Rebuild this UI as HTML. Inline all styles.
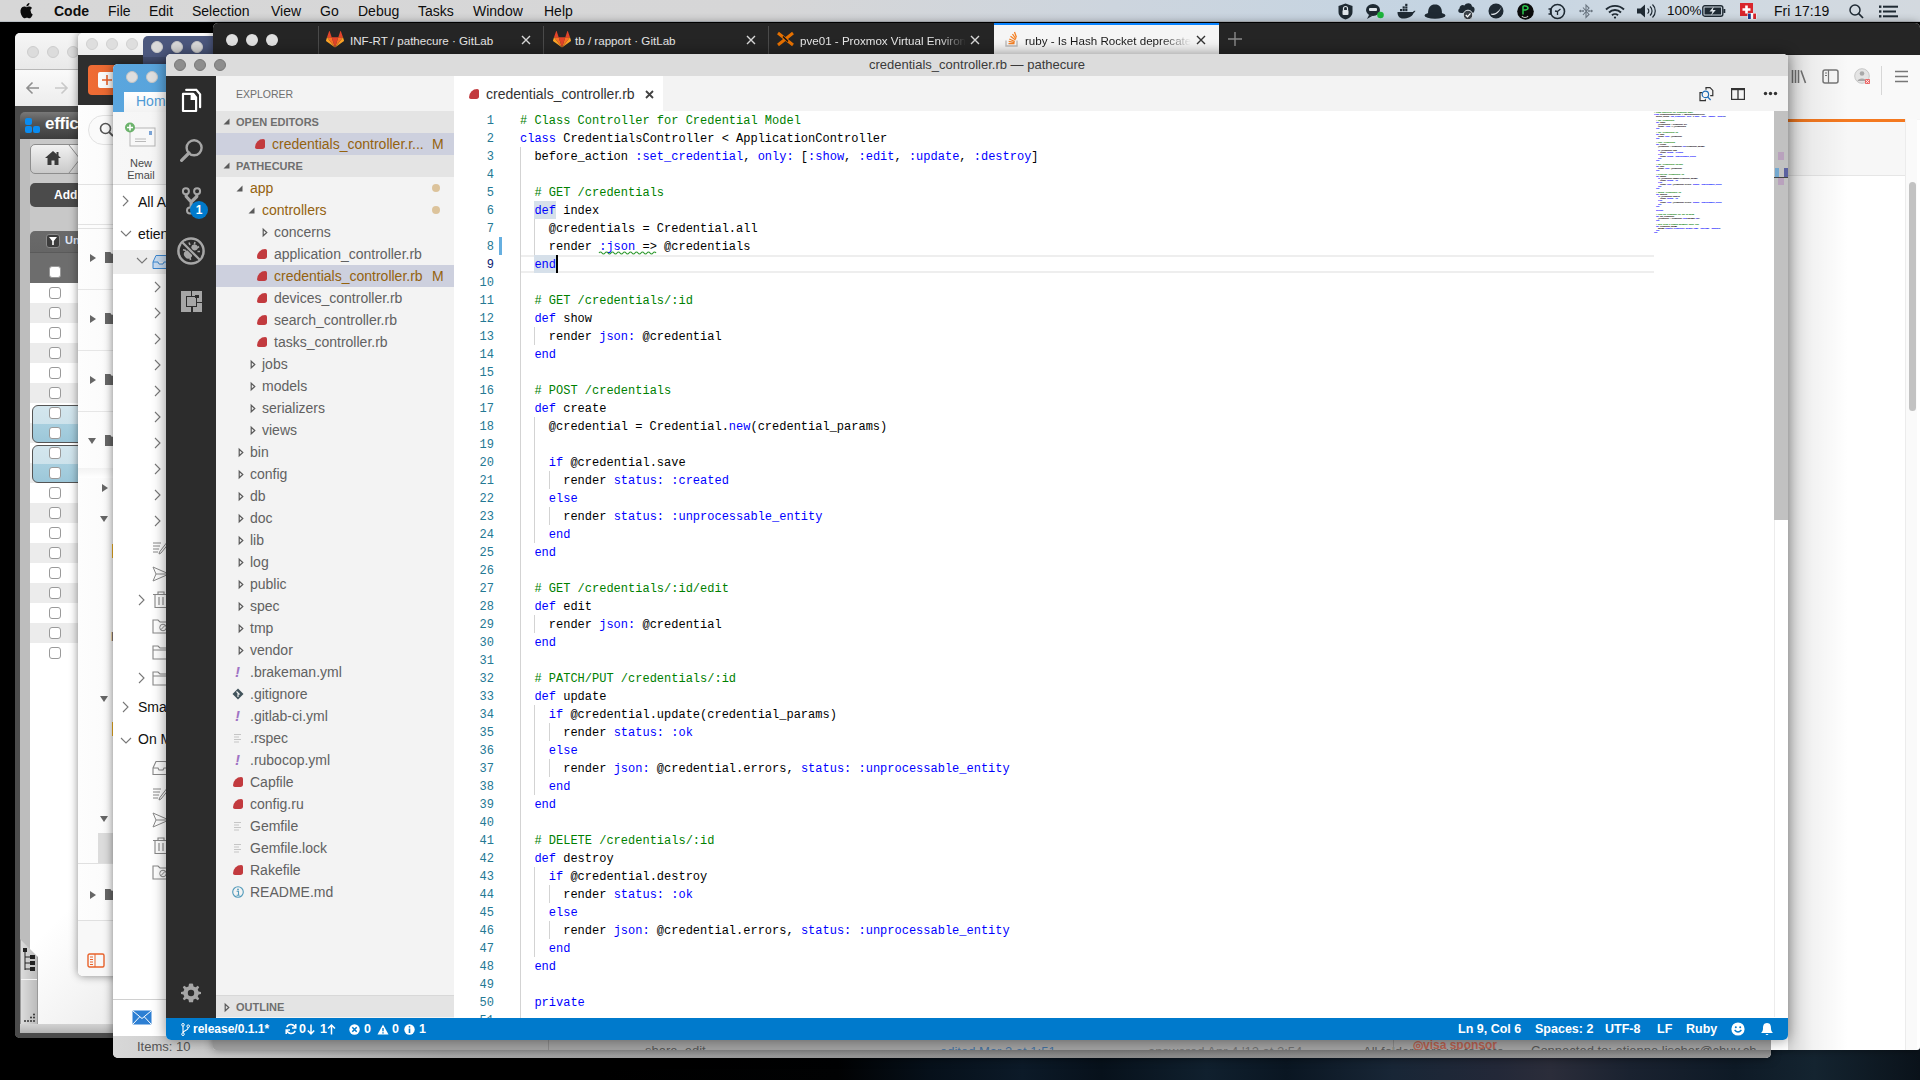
<!DOCTYPE html>
<html><head><meta charset="utf-8">
<style>
*{box-sizing:border-box;margin:0;padding:0}
html,body{width:1920px;height:1080px;overflow:hidden;background:#000;font-family:"Liberation Sans",sans-serif}
.a{position:absolute}
.mono{font-family:"Liberation Mono",monospace}
.tl{position:absolute;width:12px;height:12px;border-radius:50%}
svg{position:absolute;overflow:visible}
/* vscode */
#vs{left:166px;top:54px;width:1622px;height:986px;border-radius:5px;overflow:hidden;background:#fff;box-shadow:0 0 14px rgba(0,0,0,.45)}
#vstitle{left:0;top:0;width:1622px;height:22px;background:#dcdcdc;font-size:13px;color:#3a3a3a;text-align:center;line-height:21px}
#act{left:0;top:22px;width:50px;height:942px;background:#2c2c2c}
#side{left:50px;top:22px;width:238px;height:942px;background:#f3f3f3;font-size:14px;color:#616161;overflow:hidden}
#tabs{left:288px;top:22px;width:1334px;height:35px;background:#f3f3f3}
#editor{left:288px;top:57px;width:1334px;height:907px;background:#fff;overflow:hidden}
#status{left:0;top:964px;width:1622px;height:22px;background:#007acc;color:#fff;font-size:13px;line-height:22px;white-space:nowrap}
#status span{position:absolute;top:0}
.row{position:absolute;left:0;width:238px;height:22px;line-height:22px;white-space:nowrap}
.row .t{position:absolute;top:0}
.hdr{position:absolute;left:0;width:238px;height:22px;background:#e4e4e4;font-size:11px;font-weight:bold;color:#6f6f6f;line-height:22px}
.tw{position:absolute;width:0;height:0}
.tw.o{border-left:6px solid transparent;border-bottom:6px solid #646464}
.tw.c{border-top:4px solid transparent;border-bottom:4px solid transparent;border-left:5px solid #646464}
.tw.c::after{content:"";position:absolute;left:-4px;top:-2px;border-top:2px solid transparent;border-bottom:2px solid transparent;border-left:2.5px solid #f3f3f3}
.cl{position:absolute;left:66px;height:18px;margin-top:1px;font-family:"Liberation Mono",monospace;font-size:12px;line-height:18px;white-space:pre;color:#000}
.ln{position:absolute;left:0;width:40px;height:18px;margin-top:1px;text-align:right;font-family:"Liberation Mono",monospace;font-size:12px;line-height:18px;color:#237893}
.ln.cur{color:#0b216f}
.k{color:#0000ff}.c{color:#008000}
.ig{position:absolute;width:1px;background:#d3d3d3}
.rb{position:absolute;width:10px;height:10px;background:#c23a3e;border-radius:9px 2px 3px 2px}
.mml{position:absolute;left:0;height:2px;font-family:"Liberation Mono",monospace;font-size:2.2px;letter-spacing:-0.32px;font-weight:bold;line-height:2px;white-space:pre;color:#000}
.mod{color:#94620f}
.dot{position:absolute;width:8px;height:8px;border-radius:50%;background:#dcc39b}
</style></head><body>
<!-- wallpaper -->
<div class="a" style="left:0;top:22px;width:1920px;height:1058px;background:#000"></div>
<div class="a" style="left:600px;top:1040px;width:1320px;height:40px;background:linear-gradient(90deg,#000 0%,#010203 18%,#06101a 25%,#0c1a28 32%,#07111b 38%,#10202e 46%,#0a1622 52%,#182636 60%,#232838 68%,#2b2d3a 72%,#1a2230 78%,#0e1a26 86%,#142430 92%,#0a121a 100%)"></div>

<!-- menubar -->
<div class="a" style="left:0;top:0;width:1920px;height:22px;background:linear-gradient(90deg,#d7d7d7 0%,#d6d6d7 40%,#cdd5de 58%,#c4d4e2 75%,#cfd9e2 88%,#d3d9df 100%);border-bottom:1px solid #b9bec4;font-size:14px;color:#0d0d0d;white-space:nowrap">
 <svg style="left:20px;top:3px" width="14" height="16" viewBox="0 0 14 16"><path d="M11.4 8.5c0-2 1.6-2.9 1.7-3-0.9-1.4-2.4-1.6-2.9-1.6-1.2-0.1-2.4 0.7-3 0.7-0.6 0-1.6-0.7-2.6-0.7C3.200 4 1.900 4.800 1.200 6.100c-1.500 2.500-0.400 6.300 1 8.400 0.700 1 1.500 2.100 2.600 2.100 1 0 1.400-0.700 2.700-0.700 1.200 0 1.600 0.700 2.700 0.700 1.100 0 1.800-1 2.500-2 0.800-1.200 1.100-2.300 1.100-2.400 0 0-2.100-0.800-2.100-3.300zM9.400 2.500c0.600-0.700 1-1.600 0.900-2.500-0.800 0-1.800 0.500-2.400 1.200-0.500 0.600-1 1.600-0.900 2.500 0.900 0.100 1.800-0.500 2.400-1.200z" fill="#0d0d0d" transform="scale(0.92)"/></svg>
 <span class="a" style="left:54px;top:3px;font-weight:bold">Code</span>
 <span class="a" style="left:108px;top:3px">File</span>
 <span class="a" style="left:149px;top:3px">Edit</span>
 <span class="a" style="left:192px;top:3px">Selection</span>
 <span class="a" style="left:271px;top:3px">View</span>
 <span class="a" style="left:320px;top:3px">Go</span>
 <span class="a" style="left:358px;top:3px">Debug</span>
 <span class="a" style="left:418px;top:3px">Tasks</span>
 <span class="a" style="left:473px;top:3px">Window</span>
 <span class="a" style="left:544px;top:3px">Help</span>
 <svg style="left:1338px;top:3px" width="15" height="17"><path d="M7.5 0.5 L14.5 3 V9 C14.5 13 11 15.5 7.5 16.5 C4 15.5 0.5 13 0.5 9 V3 Z" fill="#1f2a33"/><rect x="4.5" y="7" width="6" height="5" rx="1" fill="#dfe5ea"/><path d="M5.5 7 V5.5 A2 2 0 0 1 9.5 5.5 V7" fill="none" stroke="#dfe5ea" stroke-width="1.2"/></svg>
<svg style="left:1365px;top:3px" width="20" height="17"><ellipse cx="8" cy="7" rx="7" ry="6" fill="#1f2a33"/><path d="M4 12 L2 16 L8 12.5" fill="#1f2a33"/><rect x="4" y="5" width="8" height="3" rx="1" fill="#dfe5ea"/><circle cx="15.5" cy="12" r="3.3" fill="#1db53b"/></svg>
<svg style="left:1397px;top:5px" width="19" height="14"><path d="M0.5 7 H16 C16.5 6 17.5 5.5 18.5 6 C17.5 7 17 8 16.3 8.5 C15 12 11 13.5 6 13.5 C2.5 13.5 0.5 11 0.5 7 Z" fill="#1f2a33"/><g fill="#1f2a33"><rect x="3" y="4" width="2.2" height="2.2"/><rect x="5.6" y="4" width="2.2" height="2.2"/><rect x="8.2" y="4" width="2.2" height="2.2"/><rect x="5.6" y="1.4" width="2.2" height="2.2"/><rect x="8.2" y="1.4" width="2.2" height="2.2"/><rect x="8.2" y="-1.2" width="2.2" height="2.2"/></g></svg>
<svg style="left:1424px;top:4px" width="22" height="15"><path d="M4 10 C4 3 6.5 0.5 11 0.5 C15.5 0.5 18 3 18 10 Z" fill="#1f2a33"/><ellipse cx="11" cy="11.5" rx="10.5" ry="3.2" fill="#1f2a33"/></svg>
<svg style="left:1457px;top:2px" width="19" height="18"><path d="M4 11 C1 11 0.5 8 2.5 6.5 C2.5 3.5 5.5 2 7.5 3.5 C9 0 15 0.5 15 4.5 C18 4.5 18.5 9 16 11 Z" fill="#1f2a33"/><circle cx="11" cy="13" r="4.8" fill="#3a4046" stroke="#dfe5ea" stroke-width="1"/><path d="M8.8 13 L10.5 14.8 L13.5 11.3" fill="none" stroke="#fff" stroke-width="1.3"/></svg>
<svg style="left:1488px;top:3px" width="16" height="16"><circle cx="8" cy="8" r="7.5" fill="#1f2a33"/><path d="M3 10.5 C6 11.5 11 9 13.5 3.5 C12 9 8 12.5 3.5 12 Z" fill="#dfe5ea"/></svg>
<svg style="left:1517px;top:3px" width="17" height="17"><circle cx="8.5" cy="8.5" r="8.3" fill="#0c0c0c"/><path d="M6 11.5 V3.5 C6 2.5 11 2.5 11 5 C11 7.5 6 7 6 7" fill="none" stroke="#2cc84d" stroke-width="1.5"/><path d="M5 13 C6 15 10 15 11 13" fill="none" stroke="#ccc" stroke-width="1.2"/></svg>
<svg style="left:1548px;top:3px" width="18" height="17"><circle cx="9.5" cy="8.5" r="7" fill="none" stroke="#1f2a33" stroke-width="1.6"/><path d="M0.5 6 H3 V11 H0.5" fill="none" stroke="#1f2a33" stroke-width="1.5"/><path d="M9.5 8.5 L12.5 6 M9.5 8.5 V12 M9.5 8.5 L7 8" stroke="#1f2a33" stroke-width="1.3"/></svg>
<svg style="left:1579px;top:3px" width="14" height="17"><path d="M4 4.5 L10 11.5 L7 14.5 V2 L10 5 L4 12" fill="none" stroke="#6a7580" stroke-width="1.1"/><circle cx="1.5" cy="8" r="1.2" fill="#6a7580"/><circle cx="12.5" cy="8" r="1.2" fill="#6a7580"/><circle cx="4" cy="8" r="1" fill="#6a7580"/><circle cx="10" cy="8" r="1" fill="#6a7580"/></svg>
<svg style="left:1605px;top:4px" width="20" height="15"><path d="M1 5.5 A13 13 0 0 1 19 5.5" fill="none" stroke="#1f2a33" stroke-width="1.9"/><path d="M4 8.5 A8.5 8.5 0 0 1 16 8.5" fill="none" stroke="#1f2a33" stroke-width="1.9"/><path d="M7 11.3 A4.3 4.3 0 0 1 13 11.3" fill="none" stroke="#1f2a33" stroke-width="1.9"/><circle cx="10" cy="13.6" r="1.1" fill="#1f2a33"/></svg>
<svg style="left:1636px;top:3px" width="21" height="16"><path d="M1 5.5 H4.5 L9 1.5 V14.5 L4.5 10.5 H1 Z" fill="#1f2a33"/><path d="M11.5 5.5 A3 3 0 0 1 11.5 10.5 M14 3.5 A6 6 0 0 1 14 12.5 M16.5 1.5 A9 9 0 0 1 16.5 14.5" fill="none" stroke="#1f2a33" stroke-width="1.2"/></svg>
<span class="a" style="left:1667px;top:3px;font-size:13.5px">100%</span>
<svg style="left:1702px;top:5px" width="24" height="12"><rect x="0.8" y="0.8" width="20" height="10.4" rx="2" fill="none" stroke="#1f2a33" stroke-width="1.4"/><rect x="2.5" y="2.5" width="16.6" height="7" fill="#1f2a33"/><rect x="21.5" y="4" width="1.8" height="4" fill="#1f2a33"/><path d="M11.8 1.5 L7.5 6.5 H10.5 L9 10.5 L13.8 5 H10.8 Z" fill="#dfe5ea"/></svg>
<svg style="left:1740px;top:3px" width="17" height="17"><rect x="0" y="0" width="13" height="13" fill="#d9262c"/><path d="M6.5 2.5 V10.5 M2.5 6.5 H10.5" stroke="#fff" stroke-width="2.6"/><rect x="7.5" y="10" width="9" height="6.5" rx="1" fill="#fff"/><rect x="8" y="10.5" width="2.8" height="5.5" fill="#1c3f94"/><rect x="13.2" y="10.5" width="2.8" height="5.5" fill="#d9262c"/></svg>
<span class="a" style="left:1774px;top:3px;font-size:14px">Fri 17:19</span>
<svg style="left:1849px;top:4px" width="15" height="15"><circle cx="6" cy="6" r="5" fill="none" stroke="#1f2a33" stroke-width="1.5"/><path d="M9.7 9.7 L14 14" stroke="#1f2a33" stroke-width="1.7"/></svg>
<svg style="left:1879px;top:5px" width="19" height="13"><g fill="#1f2a33"><rect x="0" y="0.5" width="2.4" height="2.4"/><rect x="0" y="5.3" width="2.4" height="2.4"/><rect x="0" y="10.1" width="2.4" height="2.4"/><rect x="4" y="0.7" width="15" height="2"/><rect x="4" y="5.5" width="13" height="2"/><rect x="4" y="10.3" width="15" height="2"/></g></svg>
</div>

<!-- Window A: efficient app -->
<div class="a" style="left:15px;top:33px;width:220px;height:1005px;border-radius:5px;overflow:hidden;background:#c3c3c3;box-shadow:0 0 8px rgba(0,0,0,.5)">
  <div class="a" style="left:0;top:0;width:220px;height:36px;background:linear-gradient(#f6f6f6,#e9e9e9)"></div>
  <div class="tl" style="left:12px;top:13px;background:#dcdcdc;border:1px solid #cdcdcd"></div>
  <div class="tl" style="left:32px;top:13px;background:#dcdcdc;border:1px solid #cdcdcd"></div>
  <div class="tl" style="left:52px;top:13px;background:#dcdcdc;border:1px solid #cdcdcd"></div>
  <div class="a" style="left:0;top:36px;width:220px;height:1px;background:#b8b8b8"></div>
  <div class="a" style="left:0;top:37px;width:220px;height:37px;background:linear-gradient(#fafafa,#ececec)"></div>
  <svg style="left:10px;top:47px" width="16" height="16"><path d="M14 8 H2 M7.5 2.5 L2 8 L7.5 13.5" fill="none" stroke="#8f8f8f" stroke-width="1.6"/></svg>
  <svg style="left:38px;top:47px" width="16" height="16"><path d="M2 8 H14 M8.5 2.5 L14 8 L8.5 13.5" fill="none" stroke="#c9c9c9" stroke-width="1.6"/></svg>
  <div class="a" style="left:0;top:73px;width:220px;height:932px;background:#4b4b4b"></div>
  <div class="a" style="left:5px;top:79px;width:215px;height:27px;border-radius:5px 5px 0 0;background:linear-gradient(#787878,#555 40%,#3d3d3d)"></div>
  <div class="a" style="left:10px;top:85px;width:7px;height:7px;border-radius:2px;background:#0a8cf0"></div>
  <div class="a" style="left:10px;top:93px;width:7px;height:7px;border-radius:2px;background:#0a8cf0"></div>
  <div class="a" style="left:18px;top:93px;width:7px;height:7px;border-radius:2px;background:#0a8cf0"></div>
  <div class="a" style="left:30px;top:81px;font-size:17px;font-weight:bold;color:#fff;letter-spacing:-0.3px">efficient</div>
  <div class="a" style="left:5px;top:106px;width:10px;height:899px;background:#bdbdbd"></div>
  <div class="a" style="left:15px;top:106px;width:205px;height:899px;background:#c8c8c8"></div>
  <div class="a" style="left:15px;top:111px;width:60px;height:30px;border-radius:5px;border:1px solid #8d8d8d;background:linear-gradient(#f2f2f2,#c9c9c9)"></div>
  <svg style="left:29px;top:117px" width="18" height="16"><path d="M9 1 L17 8 H14.5 V15 H10.5 V10.5 H7.5 V15 H3.5 V8 H1 Z" fill="#3a3a3a"/><rect x="12.5" y="2" width="2" height="4" fill="#3a3a3a"/></svg>
  <svg style="left:54px;top:111px" width="12" height="30"><path d="M0 1 L11 15 L0 29" fill="none" stroke="#8d8d8d" stroke-width="1"/></svg>
  <div class="a" style="left:15px;top:150px;width:60px;height:24px;border-radius:5px;background:#4b4b4b;color:#fff;font-size:12px;font-weight:bold;line-height:24px;padding-left:24px">Add</div>
  <div class="a" style="left:15px;top:198px;width:205px;height:52px;border-radius:5px 5px 0 0;background:linear-gradient(#6a6a6a,#5f5f5f)"></div>
  <div class="a" style="left:31px;top:201px;width:14px;height:14px;border-radius:3px;background:#3d3d3d;border:1px solid #8a8a8a"></div>
  <svg style="left:33px;top:203px" width="10" height="10"><path d="M1 1 H9 L5.8 5 V9 H4.2 V5 Z" fill="#fff"/></svg>
  <div class="a" style="left:50px;top:201px;font-size:11px;font-weight:bold;color:#dfe6f5">Uns</div>
  <div class="a" style="left:15px;top:219px;width:205px;height:31px;background:#6d6d6d;border-top:1px solid #5a5a5a"></div>
  <div class="a" style="left:34px;top:233px;width:12px;height:12px;border-radius:3px;background:#fff;border:1px solid #999"></div>
  <div class="a" style="left:15px;top:250px;width:205px;height:20px;background:#ffffff"></div>
<div class="a" style="left:15px;top:270px;width:205px;height:20px;background:#ececec"></div>
<div class="a" style="left:15px;top:290px;width:205px;height:20px;background:#ffffff"></div>
<div class="a" style="left:15px;top:310px;width:205px;height:20px;background:#ececec"></div>
<div class="a" style="left:15px;top:330px;width:205px;height:20px;background:#ffffff"></div>
<div class="a" style="left:15px;top:350px;width:205px;height:20px;background:#ececec"></div>
<div class="a" style="left:15px;top:370px;width:205px;height:20px;background:#ffffff"></div>
<div class="a" style="left:15px;top:390px;width:205px;height:20px;background:#ececec"></div>
<div class="a" style="left:15px;top:410px;width:205px;height:20px;background:#ffffff"></div>
<div class="a" style="left:15px;top:430px;width:205px;height:20px;background:#ececec"></div>
<div class="a" style="left:15px;top:450px;width:205px;height:20px;background:#ffffff"></div>
<div class="a" style="left:15px;top:470px;width:205px;height:20px;background:#ececec"></div>
<div class="a" style="left:15px;top:490px;width:205px;height:20px;background:#ffffff"></div>
<div class="a" style="left:15px;top:510px;width:205px;height:20px;background:#ececec"></div>
<div class="a" style="left:15px;top:530px;width:205px;height:20px;background:#ffffff"></div>
<div class="a" style="left:15px;top:550px;width:205px;height:20px;background:#ececec"></div>
<div class="a" style="left:15px;top:570px;width:205px;height:20px;background:#ffffff"></div>
<div class="a" style="left:15px;top:590px;width:205px;height:20px;background:#ececec"></div>
<div class="a" style="left:15px;top:610px;width:205px;height:20px;background:#ffffff"></div>
<div class="a" style="left:17px;top:372px;width:203px;height:38px;border-radius:6px;border:1px solid #555;background:linear-gradient(#d3e6ee 0%,#cde2eb 50%,#a8cfdf 50%,#9cc7d9 100%)"></div>
<div class="a" style="left:17px;top:412px;width:203px;height:38px;border-radius:6px;border:1px solid #555;background:linear-gradient(#d3e6ee 0%,#cde2eb 50%,#a8cfdf 50%,#9cc7d9 100%)"></div>
<div class="a" style="left:34px;top:254px;width:12px;height:12px;border-radius:3px;background:#fff;border:1px solid #9a9a9a"></div>
<div class="a" style="left:34px;top:274px;width:12px;height:12px;border-radius:3px;background:#fff;border:1px solid #9a9a9a"></div>
<div class="a" style="left:34px;top:294px;width:12px;height:12px;border-radius:3px;background:#fff;border:1px solid #9a9a9a"></div>
<div class="a" style="left:34px;top:314px;width:12px;height:12px;border-radius:3px;background:#fff;border:1px solid #9a9a9a"></div>
<div class="a" style="left:34px;top:334px;width:12px;height:12px;border-radius:3px;background:#fff;border:1px solid #9a9a9a"></div>
<div class="a" style="left:34px;top:354px;width:12px;height:12px;border-radius:3px;background:#fff;border:1px solid #9a9a9a"></div>
<div class="a" style="left:34px;top:374px;width:12px;height:12px;border-radius:3px;background:#fff;border:1px solid #9a9a9a"></div>
<div class="a" style="left:34px;top:394px;width:12px;height:12px;border-radius:3px;background:#fff;border:1px solid #9a9a9a"></div>
<div class="a" style="left:34px;top:414px;width:12px;height:12px;border-radius:3px;background:#fff;border:1px solid #9a9a9a"></div>
<div class="a" style="left:34px;top:434px;width:12px;height:12px;border-radius:3px;background:#fff;border:1px solid #9a9a9a"></div>
<div class="a" style="left:34px;top:454px;width:12px;height:12px;border-radius:3px;background:#fff;border:1px solid #9a9a9a"></div>
<div class="a" style="left:34px;top:474px;width:12px;height:12px;border-radius:3px;background:#fff;border:1px solid #9a9a9a"></div>
<div class="a" style="left:34px;top:494px;width:12px;height:12px;border-radius:3px;background:#fff;border:1px solid #9a9a9a"></div>
<div class="a" style="left:34px;top:514px;width:12px;height:12px;border-radius:3px;background:#fff;border:1px solid #9a9a9a"></div>
<div class="a" style="left:34px;top:534px;width:12px;height:12px;border-radius:3px;background:#fff;border:1px solid #9a9a9a"></div>
<div class="a" style="left:34px;top:554px;width:12px;height:12px;border-radius:3px;background:#fff;border:1px solid #9a9a9a"></div>
<div class="a" style="left:34px;top:574px;width:12px;height:12px;border-radius:3px;background:#fff;border:1px solid #9a9a9a"></div>
<div class="a" style="left:34px;top:594px;width:12px;height:12px;border-radius:3px;background:#fff;border:1px solid #9a9a9a"></div>
<div class="a" style="left:34px;top:614px;width:12px;height:12px;border-radius:3px;background:#fff;border:1px solid #9a9a9a"></div>
  <div class="a" style="left:15px;top:630px;width:205px;height:361px;background:linear-gradient(135deg,#fff 0%,#fff 50%,#e0e0e0 100%)"></div>
  <div class="a" style="left:5px;top:906px;width:18px;height:89px;background:linear-gradient(90deg,#dcdcdc,#bcbcbc);border:1px solid #9a9a9a;clip-path:polygon(0 0,100% 18px,100% 100%,0 100%)"></div>
  <div class="a" style="left:6px;top:946px;width:16px;height:1px;background:#f4f4f4"></div>
  <svg style="left:7px;top:915px" width="16" height="30"><rect x="1" y="0" width="4" height="4" fill="#222"/><path d="M3 4 V22 M3 9 H9 M3 15 H9 M3 21 H9" stroke="#222" stroke-width="1" fill="none"/><rect x="8" y="7" width="5" height="4" fill="#222"/><rect x="8" y="13" width="5" height="4" fill="#222"/><rect x="8" y="19" width="5" height="4" fill="#222"/></svg>
  <svg style="left:8px;top:980px" width="14" height="11"><g fill="#333"><circle cx="11" cy="1.5" r="1"/><circle cx="8" cy="4.5" r="1"/><circle cx="11" cy="4.5" r="1"/><circle cx="5" cy="8" r="1"/><circle cx="8" cy="8" r="1"/><circle cx="11" cy="8" r="1"/><circle cx="2" cy="8" r="1"/></g></svg>
  <div class="a" style="left:5px;top:991px;width:215px;height:9px;background:linear-gradient(#d2d2d2,#b5b5b5)"></div><div class="a" style="left:0;top:1000px;width:220px;height:5px;background:#4b4b4b"></div>
</div>

<!-- Window B -->
<div class="a" style="left:78px;top:33px;width:200px;height:943px;border-radius:5px;overflow:hidden;background:#fff;box-shadow:0 0 8px rgba(0,0,0,.45)">
  <div class="a" style="left:0;top:0;width:200px;height:22px;background:linear-gradient(#fafafa,#ececec)"></div>
  <div class="tl" style="left:8px;top:5px;background:#dedede;border:1px solid #d0d0d0"></div>
  <div class="tl" style="left:28px;top:5px;background:#dedede;border:1px solid #d0d0d0"></div>
  <div class="tl" style="left:48px;top:5px;background:#dedede;border:1px solid #d0d0d0"></div>
  <div class="a" style="left:0;top:22px;width:200px;height:50px;background:#2e2e2e"></div>
  <div class="a" style="left:10px;top:32px;width:40px;height:30px;border-radius:4px;background:linear-gradient(90deg,#f06c35,#e2662f)"></div>
  <div class="a" style="left:20px;top:39px;width:18px;height:16px;border-radius:2px;background:#fafafa"></div>
  <svg style="left:23px;top:41px" width="12" height="12"><path d="M6 1 V11 M1 6 H11" stroke="#e5602a" stroke-width="1.6"/></svg>
  <div class="a" style="left:0;top:72px;width:200px;height:871px;background:linear-gradient(90deg,#fdfdfd,#f0f0f0)"></div>
  <div class="a" style="left:10px;top:82px;width:60px;height:30px;border-radius:15px;border:1px solid #e2e2e2;background:#fafafa"></div>
  <svg style="left:21px;top:89px" width="16" height="16"><circle cx="6.5" cy="6.5" r="5" fill="none" stroke="#555" stroke-width="1.6"/><path d="M10 10 L14 14" stroke="#555" stroke-width="1.8"/></svg>
  <div class="a" style="left:0;top:151px;width:200px;height:1px;background:#e2e2e2"></div>
  <div class="a" style="left:0;top:191px;width:200px;height:1px;background:#e2e2e2"></div>
  <div class="a" style="left:0;top:195px;width:200px;height:1px;background:#e2e2e2"></div>
  <div class="a" style="left:0;top:256px;width:200px;height:1px;background:#e6e6e6"></div>
  <div class="a" style="left:0;top:317px;width:200px;height:1px;background:#e6e6e6"></div>
  <div class="a" style="left:0;top:378px;width:200px;height:1px;background:#e6e6e6"></div>
  <svg style="left:11px;top:220px" width="8" height="10"><path d="M1 1 L7 5 L1 9 Z" fill="#666"/></svg>
  <div class="a" style="left:27px;top:219px;width:12px;height:11px;background:#666;clip-path:polygon(0 0,45% 0,55% 15%,100% 15%,100% 100%,0 100%)"></div>
  <svg style="left:11px;top:281px" width="8" height="10"><path d="M1 1 L7 5 L1 9 Z" fill="#666"/></svg>
  <div class="a" style="left:27px;top:280px;width:12px;height:11px;background:#666;clip-path:polygon(0 0,45% 0,55% 15%,100% 15%,100% 100%,0 100%)"></div>
  <svg style="left:9px;top:404px" width="10" height="8"><path d="M1 1 L9 1 L5 7 Z" fill="#666"/></svg>
  <div class="a" style="left:27px;top:341px;width:12px;height:11px;background:#666;clip-path:polygon(0 0,45% 0,55% 15%,100% 15%,100% 100%,0 100%)"></div>
  <svg style="left:11px;top:342px" width="8" height="10"><path d="M1 1 L7 5 L1 9 Z" fill="#666"/></svg>
  <div class="a" style="left:27px;top:402px;width:12px;height:11px;background:#666;clip-path:polygon(0 0,45% 0,55% 15%,100% 15%,100% 100%,0 100%)"></div>
  <div class="a" style="left:0;top:435px;width:200px;height:10px;background:linear-gradient(#f2f2f2,#fff)"></div>
  <svg style="left:23px;top:450px" width="8" height="10"><path d="M1 1 L7 5 L1 9 Z" fill="#666"/></svg>
  <svg style="left:21px;top:482px" width="10" height="8"><path d="M1 1 L9 1 L5 7 Z" fill="#666"/></svg>
  <div class="a" style="left:34px;top:511px;width:3px;height:14px;background:#f0b020"></div>
  <div class="a" style="left:33px;top:597px;font-size:12px;font-weight:bold;color:#777">P</div>
  <svg style="left:21px;top:662px" width="10" height="8"><path d="M1 1 L9 1 L5 7 Z" fill="#666"/></svg>
  <div class="a" style="left:34px;top:689px;width:3px;height:14px;background:#f0b020"></div>
  <svg style="left:21px;top:782px" width="10" height="8"><path d="M1 1 L9 1 L5 7 Z" fill="#666"/></svg>
  <div class="a" style="left:20px;top:800px;width:180px;height:30px;background:#dcdcdc"></div>
  <div class="a" style="left:0;top:830px;width:200px;height:1px;background:#e0e0e0"></div>
  <svg style="left:11px;top:857px" width="8" height="10"><path d="M1 1 L7 5 L1 9 Z" fill="#666"/></svg>
  <div class="a" style="left:27px;top:856px;width:12px;height:11px;background:#666;clip-path:polygon(0 0,45% 0,55% 15%,100% 15%,100% 100%,0 100%)"></div>
  <div class="a" style="left:0;top:887px;width:200px;height:1px;background:#e0e0e0"></div>
  <div class="a" style="left:0;top:888px;width:200px;height:55px;background:#f8f8f8"></div>
  <svg style="left:9px;top:920px" width="18" height="15"><rect x="1" y="1" width="16" height="13" rx="1.5" fill="none" stroke="#e8622a" stroke-width="1.4"/><path d="M8 1 V14 M3 4 H6 M3 6.5 H6 M3 9 H6 M3 11.5 H6" stroke="#e8622a" stroke-width="1"/></svg>
</div>

<!-- Window C (blue-purple) -->
<div class="a" style="left:143px;top:36px;width:120px;height:100px;border-radius:5px 5px 0 0;overflow:hidden;background:#4c587e">
  <div class="tl" style="left:8px;top:5px;background:#dadada;border:1px solid #c9c9c9"></div>
  <div class="tl" style="left:28px;top:5px;background:#dadada;border:1px solid #c9c9c9"></div>
  <div class="tl" style="left:48px;top:5px;background:#dadada;border:1px solid #c9c9c9"></div>
  <div class="a" style="left:0;top:21px;width:120px;height:80px;background:#414c6e"></div>
</div>

<!-- Window E (Outlook) -->
<div class="a" style="left:113px;top:64px;width:1658px;height:994px;border-radius:5px;overflow:hidden;background:#fff;box-shadow:0 0 10px rgba(0,0,0,.5)">
  <div class="a" style="left:0;top:0;width:300px;height:48px;background:linear-gradient(90deg,#5aa6de,#4f97cf)"></div>
  <div class="tl" style="left:13px;top:7px;background:#dedede;border:1px solid #c5c5c5"></div>
  <div class="tl" style="left:33px;top:7px;background:#dedede;border:1px solid #c5c5c5"></div>
  <div class="a" style="left:11px;top:28px;width:120px;height:20px;background:linear-gradient(#fff,#f3f3f3)"></div>
  <div class="a" style="left:23px;top:29px;font-size:14px;color:#4f9bd6">Home</div>
  <div class="a" style="left:0;top:48px;width:300px;height:72px;background:linear-gradient(90deg,#f7f7f7,#eeeeee)"></div>
  <svg style="left:11px;top:58px" width="34" height="26"><rect x="6" y="6" width="25" height="18" fill="#f8f8f8" stroke="#b5b5b5" stroke-width="1"/><rect x="25" y="9" width="3" height="4" fill="#7aa3d5"/><path d="M11 17 H22 M11 19.5 H22" stroke="#aaa" stroke-width="0.8"/><circle cx="6" cy="5.5" r="5" fill="#6cb36c"/><path d="M6 2.5 V8.5 M3 5.5 H9" stroke="#fff" stroke-width="1.6"/></svg>
  <div class="a" style="left:13px;top:93px;font-size:11px;color:#4a4a4a;line-height:12px;text-align:center;width:30px">New<br>Email</div>
  <div class="a" style="left:0;top:120px;width:300px;height:1px;background:#dcdcdc"></div>
  <svg style="left:9px;top:131px" width="8" height="12"><path d="M1 1 L6 6 L1 11" fill="none" stroke="#777" stroke-width="1.1"/></svg>
  <div class="a" style="left:25px;top:130px;font-size:14px;color:#111">All Accounts</div>
  <svg style="left:7px;top:166px" width="12" height="8"><path d="M1 1 L6 6 L11 1" fill="none" stroke="#777" stroke-width="1.1"/></svg>
  <div class="a" style="left:25px;top:162px;font-size:14px;color:#111">etienne</div>
  <div class="a" style="left:0;top:186px;width:300px;height:24px;background:#ececec"></div>
  <svg style="left:23px;top:193px" width="12" height="8"><path d="M1 1 L6 6 L11 1" fill="none" stroke="#777" stroke-width="1.1"/></svg>
  <svg style="left:39px;top:190px" width="18" height="16"><path d="M1 8 L4 1.5 H14 L17 8 V14.5 H1 Z M1 8 H6 L7 10 H11 L12 8 H17" fill="#c9ddf2" stroke="#3b86cf" stroke-width="1"/></svg>
  <svg style="left:41px;top:217px" width="8" height="12"><path d="M1 1 L6 6 L1 11" fill="none" stroke="#777" stroke-width="1.1"/></svg>
<svg style="left:41px;top:243px" width="8" height="12"><path d="M1 1 L6 6 L1 11" fill="none" stroke="#777" stroke-width="1.1"/></svg>
<svg style="left:41px;top:269px" width="8" height="12"><path d="M1 1 L6 6 L1 11" fill="none" stroke="#777" stroke-width="1.1"/></svg>
<svg style="left:41px;top:295px" width="8" height="12"><path d="M1 1 L6 6 L1 11" fill="none" stroke="#777" stroke-width="1.1"/></svg>
<svg style="left:41px;top:321px" width="8" height="12"><path d="M1 1 L6 6 L1 11" fill="none" stroke="#777" stroke-width="1.1"/></svg>
<svg style="left:41px;top:347px" width="8" height="12"><path d="M1 1 L6 6 L1 11" fill="none" stroke="#777" stroke-width="1.1"/></svg>
<svg style="left:41px;top:373px" width="8" height="12"><path d="M1 1 L6 6 L1 11" fill="none" stroke="#777" stroke-width="1.1"/></svg>
<svg style="left:41px;top:399px" width="8" height="12"><path d="M1 1 L6 6 L1 11" fill="none" stroke="#777" stroke-width="1.1"/></svg>
<svg style="left:41px;top:425px" width="8" height="12"><path d="M1 1 L6 6 L1 11" fill="none" stroke="#777" stroke-width="1.1"/></svg>
<svg style="left:41px;top:451px" width="8" height="12"><path d="M1 1 L6 6 L1 11" fill="none" stroke="#777" stroke-width="1.1"/></svg>
<svg style="left:39px;top:476px" width="18" height="16"><path d="M1 3 H9 M1 6 H8 M1 9 H7 M1 12 H6" stroke="#888" stroke-width="1"/><path d="M16 1 L17.5 2.5 L9 13 L7 14 L7.5 12 Z" fill="none" stroke="#888" stroke-width="1"/></svg>
<svg style="left:39px;top:502px" width="18" height="16"><path d="M1 1 L17 8 L1 15 L4 8 Z M4 8 H17" fill="none" stroke="#888" stroke-width="1"/></svg>
<svg style="left:39px;top:527px" width="18" height="18"><path d="M1 3.5 H17 M6 3.5 V1 H12 V3.5 M3 3.5 V16.5 H15 V3.5 M7 6 V14 M11 6 V14" fill="none" stroke="#888" stroke-width="1.1"/></svg>
<svg style="left:39px;top:554px" width="18" height="16"><path d="M1 2 H6 L8 4 H17 V15 H1 Z" fill="none" stroke="#888" stroke-width="1.1"/><circle cx="11" cy="9.5" r="3.3" fill="none" stroke="#888" stroke-width="1"/><path d="M8.8 11.8 L13.2 7.2" stroke="#888" stroke-width="1"/></svg>
<svg style="left:39px;top:580px" width="18" height="16"><path d="M1 2 H6 L8 4 H17 V15 H1 Z M1 6 H17" fill="none" stroke="#888" stroke-width="1.1"/></svg>
<svg style="left:39px;top:606px" width="18" height="16"><path d="M1 2 H6 L8 4 H17 V15 H1 Z M1 6 H17" fill="none" stroke="#888" stroke-width="1.1"/></svg>
<svg style="left:39px;top:696px" width="18" height="16"><path d="M1 8 L4 1.5 H14 L17 8 V14.5 H1 Z M1 8 H6 L7 10 H11 L12 8 H17" fill="none" stroke="#888" stroke-width="1.1"/></svg>
<svg style="left:39px;top:722px" width="18" height="16"><path d="M1 3 H9 M1 6 H8 M1 9 H7 M1 12 H6" stroke="#888" stroke-width="1"/><path d="M16 1 L17.5 2.5 L9 13 L7 14 L7.5 12 Z" fill="none" stroke="#888" stroke-width="1"/></svg>
<svg style="left:39px;top:748px" width="18" height="16"><path d="M1 1 L17 8 L1 15 L4 8 Z M4 8 H17" fill="none" stroke="#888" stroke-width="1"/></svg>
<svg style="left:39px;top:773px" width="18" height="18"><path d="M1 3.5 H17 M6 3.5 V1 H12 V3.5 M3 3.5 V16.5 H15 V3.5 M7 6 V14 M11 6 V14" fill="none" stroke="#888" stroke-width="1.1"/></svg>
<svg style="left:39px;top:800px" width="18" height="16"><path d="M1 2 H6 L8 4 H17 V15 H1 Z" fill="none" stroke="#888" stroke-width="1.1"/><circle cx="11" cy="9.5" r="3.3" fill="none" stroke="#888" stroke-width="1"/><path d="M8.8 11.8 L13.2 7.2" stroke="#888" stroke-width="1"/></svg>
<svg style="left:25px;top:530px" width="8" height="12"><path d="M1 1 L6 6 L1 11" fill="none" stroke="#777" stroke-width="1.1"/></svg>
<svg style="left:25px;top:608px" width="8" height="12"><path d="M1 1 L6 6 L1 11" fill="none" stroke="#777" stroke-width="1.1"/></svg>
<svg style="left:9px;top:637px" width="8" height="12"><path d="M1 1 L6 6 L1 11" fill="none" stroke="#777" stroke-width="1.1"/></svg>
<div class="a" style="left:25px;top:635px;font-size:14px;color:#111">Smart</div>
<svg style="left:7px;top:673px" width="12" height="8"><path d="M1 1 L6 6 L11 1" fill="none" stroke="#777" stroke-width="1.1"/></svg>
<div class="a" style="left:25px;top:667px;font-size:14px;color:#111">On My</div>
  <div class="a" style="left:0;top:935px;width:300px;height:1px;background:#d0d0d0"></div>
  <svg style="left:19px;top:946px" width="20" height="15"><rect x="0.5" y="0.5" width="19" height="14" rx="1" fill="#2d7fd3"/><path d="M1 1 L10 8.5 L19 1 M1 14 L7.5 7 M19 14 L12.5 7" fill="none" stroke="#fff" stroke-width="1"/></svg>
  <div class="a" style="left:0;top:972px;width:1658px;height:22px;background:linear-gradient(90deg,#d8d8d8,#c4c4c4 8%,#a9a9a9 20%,#8c8c8c 60%,#969696 100%)"></div>
  <div class="a" style="left:24px;top:975px;font-size:13px;color:#555">Items: 10</div>
</div>

<!-- Firefox -->
<div class="a" style="left:213px;top:23px;width:1707px;height:1027px;border-radius:5px 5px 3px 3px;overflow:hidden;background:#fff;box-shadow:0 0 10px rgba(0,0,0,.4)">
  <div class="a" style="left:0;top:0;width:1707px;height:32px;background:#252525"></div>
  <div class="tl" style="left:13px;top:11px;background:#e0e0e0"></div>
  <div class="tl" style="left:33px;top:11px;background:#e0e0e0"></div>
  <div class="tl" style="left:53px;top:11px;background:#e0e0e0"></div>
  <div class="a" style="left:105px;top:3px;width:1px;height:29px;background:#4a4a4a"></div>
<div class="a" style="left:330px;top:3px;width:1px;height:29px;background:#4a4a4a"></div>
<div class="a" style="left:555px;top:3px;width:1px;height:29px;background:#4a4a4a"></div>
<svg style="left:113px;top:8px" width="18" height="17" viewBox="0 0 18 17"><path d="M9 16.5 L12.3 6.3 H5.7 Z" fill="#e24329"/><path d="M9 16.5 L5.7 6.3 H1 Z" fill="#fc6d26"/><path d="M1 6.3 L0 9.5 C-0.1 9.8 0 10.1 0.3 10.3 L9 16.5 Z" fill="#fca326"/><path d="M1 6.3 H5.7 L3.7 0.2 C3.6 -0.1 3.2 -0.1 3.1 0.2 Z" fill="#e24329"/><path d="M9 16.5 L12.3 6.3 H17 Z" fill="#fc6d26"/><path d="M17 6.3 L18 9.5 C18.1 9.8 18 10.1 17.7 10.3 L9 16.5 Z" fill="#fca326"/><path d="M17 6.3 H12.3 L14.3 0.2 C14.4 -0.1 14.8 -0.1 14.9 0.2 Z" fill="#e24329"/></svg>
<div class="a" style="left:137px;top:0;line-height:35px;font-size:11.6px;color:#e6e6e6;white-space:nowrap">INF-RT / pathecure · GitLab</div>
<svg style="left:308px;top:12px" width="10" height="10"><path d="M1 1 L9 9 M9 1 L1 9" stroke="#d8d8d8" stroke-width="1.4"/></svg>
<svg style="left:340px;top:8px" width="18" height="17" viewBox="0 0 18 17"><path d="M9 16.5 L12.3 6.3 H5.7 Z" fill="#e24329"/><path d="M9 16.5 L5.7 6.3 H1 Z" fill="#fc6d26"/><path d="M1 6.3 L0 9.5 C-0.1 9.8 0 10.1 0.3 10.3 L9 16.5 Z" fill="#fca326"/><path d="M1 6.3 H5.7 L3.7 0.2 C3.6 -0.1 3.2 -0.1 3.1 0.2 Z" fill="#e24329"/><path d="M9 16.5 L12.3 6.3 H17 Z" fill="#fc6d26"/><path d="M17 6.3 L18 9.5 C18.1 9.8 18 10.1 17.7 10.3 L9 16.5 Z" fill="#fca326"/><path d="M17 6.3 H12.3 L14.3 0.2 C14.4 -0.1 14.8 -0.1 14.9 0.2 Z" fill="#e24329"/></svg>
<div class="a" style="left:362px;top:0;line-height:35px;font-size:11.6px;color:#e6e6e6;white-space:nowrap">tb / rapport · GitLab</div>
<svg style="left:533px;top:12px" width="10" height="10"><path d="M1 1 L9 9 M9 1 L1 9" stroke="#d8d8d8" stroke-width="1.4"/></svg>
<svg style="left:564px;top:9px" width="17" height="14"><path d="M1 1 L16 13 M16 1 L1 13" stroke="#e57000" stroke-width="3"/><path d="M6 4.5 L11 9.5" stroke="#111" stroke-width="1.5"/></svg>
<div class="a" style="left:587px;top:0;width:166px;overflow:hidden;line-height:35px;font-size:11.6px;color:#e6e6e6;white-space:nowrap;-webkit-mask-image:linear-gradient(90deg,#000 84%,transparent 100%)">pve01 - Proxmox Virtual Environment</div>
<svg style="left:757px;top:12px" width="10" height="10"><path d="M1 1 L9 9 M9 1 L1 9" stroke="#d8d8d8" stroke-width="1.4"/></svg>
<div class="a" style="left:781px;top:0;width:225px;height:32px;background:#f5f5f5;border-top:2px solid #0a84ff"></div>
<svg style="left:792px;top:8px" width="14" height="16" viewBox="0 0 14 16"><path d="M1 9.5 V15 H12 V9.5" fill="none" stroke="#bcbbbb" stroke-width="1.4"/><path d="M3.5 12.6 H9.5 M3.7 10.4 L9.6 11.6 M4.3 8 L9.8 10.5 M5.5 5.3 L10.5 9 M7.5 3 L11 8 M9.5 1 L11.5 6.5" stroke="#f48024" stroke-width="1.3"/></svg>
<div class="a" style="left:812px;top:0;width:166px;overflow:hidden;line-height:35px;font-size:11.6px;color:#1a1a1a;white-space:nowrap;-webkit-mask-image:linear-gradient(90deg,#000 82%,transparent 100%)">ruby - Is Hash Rocket deprecated?</div>
<svg style="left:983px;top:12px" width="10" height="10"><path d="M1 1 L9 9 M9 1 L1 9" stroke="#333" stroke-width="1.4"/></svg>
<svg style="left:1015px;top:9px" width="14" height="14"><path d="M7 0 V14 M0 7 H14" stroke="#8a8a8a" stroke-width="1.4"/></svg>
  <div class="a" style="left:0;top:32px;width:1707px;height:65px;background:#f5f5f5"></div>
  <div class="a" style="left:1575px;top:32px;width:132px;height:64px;background:#f9f9f9"></div>
<svg style="left:1578px;top:46px" width="16" height="15"><path d="M1.5 1 V14 M4.5 1 V14 M7.5 1 V14 M10 1.5 L14.5 14" stroke="#777" stroke-width="1.6"/></svg>
<svg style="left:1609px;top:46px" width="17" height="15"><rect x="1" y="1" width="15" height="13" rx="2" fill="none" stroke="#777" stroke-width="1.5"/><path d="M6.5 1 V14 M3 4 H5 M3 6.5 H5" stroke="#777" stroke-width="1.2"/></svg>
<svg style="left:1641px;top:45px" width="17" height="17"><circle cx="8" cy="8" r="7.3" fill="#e4e4e4" stroke="#c8c8c8" stroke-width="1"/><circle cx="8" cy="5.5" r="2.3" fill="#a8a8a8"/><path d="M3.5 13 C4 9.5 12 9.5 12.5 13" fill="#a8a8a8"/><rect x="11" y="11" width="5" height="5" fill="#ea6a6a"/><path d="M11.8 11.8 L15.2 15.2 M15.2 11.8 L11.8 15.2" stroke="#fff" stroke-width="0.8"/></svg>
<div class="a" style="left:1668px;top:43px;width:1px;height:29px;background:#d7d7d7"></div>
<svg style="left:1682px;top:47px" width="13" height="13"><path d="M0 1.5 H13 M0 6.5 H13 M0 11.5 H13" stroke="#777" stroke-width="1.6"/></svg>
<div class="a" style="left:1575px;top:96px;width:117px;height:3px;background:#f47920"></div>
<div class="a" style="left:1575px;top:99px;width:117px;height:928px;background:#fff"></div>
<div class="a" style="left:1575px;top:99px;width:117px;height:53px;background:#f7f7f7"></div>
<div class="a" style="left:1575px;top:152px;width:117px;height:1px;background:#e6e6e6"></div>
<div class="a" style="left:1692px;top:96px;width:12px;height:931px;background:#fafafa;border-left:1px solid #ececec"></div>
<div class="a" style="left:1696px;top:159px;width:7px;height:229px;border-radius:4px;background:#c2c2c2"></div>
<div class="a" style="left:1575px;top:31px;width:60px;height:996px;background:linear-gradient(90deg,rgba(0,0,0,.16),rgba(0,0,0,.05) 40%,rgba(0,0,0,0) 100%)"></div>
  <!-- bottom strip -->
  <div class="a" style="left:0;top:1016px;width:1558px;height:11px;background:#a2a2a2;overflow:hidden;font-size:13px;white-space:nowrap">
    <div class="a" style="left:335px;top:0;width:1px;height:11px;background:#8a8a8a"></div>
    <span class="a" style="left:432px;top:4px;color:#555">share&nbsp;&nbsp;edit</span>
    <span class="a" style="left:727px;top:5px;color:#45709e">edited Mar 3 at 1:51</span>
    <span class="a" style="left:935px;top:5px;color:#707070">answered Apr 4 '12 at 2:54</span>
    <span class="a" style="left:1150px;top:5px;color:#5a5a5a">All folders are up to date.</span>
    <div class="a" style="left:1180px;top:0;width:1px;height:11px;background:#8a8a8a"></div>
    <span class="a" style="left:1200px;top:-1px;color:#b5604f;font-weight:bold;font-size:12px">&#9678;visa sponsor</span>
    <span class="a" style="left:1318px;top:4px;color:#555">Connected to: etienne.lischer@chuv.ch</span>
  </div>
</div>


<!-- VS Code -->
<div id="vs" class="a">
  <div id="vstitle" class="a">credentials_controller.rb — pathecure</div>
  <div class="tl" style="left:8px;top:5px;background:#8d8d8d;border:1px solid #787878"></div>
  <div class="tl" style="left:28px;top:5px;background:#8d8d8d;border:1px solid #787878"></div>
  <div class="tl" style="left:48px;top:5px;background:#8d8d8d;border:1px solid #787878"></div>
  <div id="act" class="a"><svg style="left:10px;top:8px" width="32" height="32" viewBox="0 0 32 32">
 <path d="M10.2 5.9 H20.3 L24.1 10.3 V23.2" fill="none" stroke="#fff" stroke-width="2.2" stroke-linecap="round" stroke-linejoin="miter"/>
 <path d="M7 9.9 H17.3 L20.1 13.4 V27 H7 Z" fill="none" stroke="#fff" stroke-width="2.2" stroke-linejoin="round"/>
 <path d="M14.6 9.9 V16.1 H20.1 V13.4 L17.3 9.9 Z" fill="#fff"/>
</svg>
<svg style="left:0;top:0" width="50" height="150" viewBox="0 0 50 150">
 <circle cx="28.1" cy="71.8" r="7.5" fill="none" stroke="#a6a6a6" stroke-width="2.4"/>
 <path d="M23 77 L15.6 84.4" stroke="#a6a6a6" stroke-width="3.2" stroke-linecap="round"/>
 <circle cx="19.9" cy="115.3" r="3" fill="none" stroke="#a6a6a6" stroke-width="2"/>
 <circle cx="31.1" cy="115.3" r="3" fill="none" stroke="#a6a6a6" stroke-width="2"/>
 <circle cx="24" cy="134.5" r="3" fill="none" stroke="#a6a6a6" stroke-width="2"/>
 <path d="M20.2 118.2 V120.5 L25.2 126 M30.8 118.2 V120.5 L25.2 126 V131.5" fill="none" stroke="#a6a6a6" stroke-width="3.2" stroke-linejoin="round"/>
</svg>
<div class="a" style="left:24px;top:125px;width:18px;height:18px;border-radius:50%;background:#007acc;color:#fff;font-size:12px;font-weight:bold;text-align:center;line-height:18px">1</div>
<svg style="left:10px;top:160px" width="30" height="30" viewBox="0 0 30 30">
 <circle cx="15" cy="15" r="12.6" fill="none" stroke="#a6a6a6" stroke-width="2.5"/>
 <ellipse cx="12" cy="18.5" rx="3.8" ry="4.3" fill="#a6a6a6" transform="rotate(-40 12 18.5)"/>
 <ellipse cx="18.5" cy="11.5" rx="3.2" ry="3" fill="#a6a6a6"/>
 <path d="M13 6.5 L14 9 M19 6 L18.3 8.5 M23 10.5 L21 12 M24 15.5 L21.5 15.5 M7 13.8 L10 14.5 M14.5 24 L14 21.5 M20.5 19.5 L18 17.5" stroke="#a6a6a6" stroke-width="1.6"/>
 <path d="M6.8 6.8 L23.2 23.2" stroke="#2c2c2c" stroke-width="4.2"/>
 <path d="M6.5 6.5 L23.5 23.5" stroke="#a6a6a6" stroke-width="2.3"/>
</svg>
<svg style="left:15px;top:215px" width="21" height="21" viewBox="0 0 21 21" shape-rendering="crispEdges">
 <rect x="0" y="0" width="10" height="21" fill="#a6a6a6"/>
 <rect x="11" y="0" width="10" height="11" fill="#a6a6a6"/>
 <rect x="12" y="12" width="9" height="9" fill="#a6a6a6"/>
 <rect x="5" y="5" width="11" height="11" fill="#2c2c2c"/>
 <rect x="6" y="6" width="9" height="9" fill="#a6a6a6"/>
 <rect x="14" y="4" width="4" height="3" fill="#2c2c2c"/>
</svg>
<svg style="left:15px;top:907px" width="20" height="20" viewBox="0 0 20 20">
 <path d="M10 0.5 L12 0.8 L12.5 3.4 L14.7 4.3 L16.8 2.8 L18.2 4.2 L16.7 6.4 L17.6 8.5 L20 9 V11 L17.6 11.5 L16.7 13.6 L18.2 15.8 L16.8 17.2 L14.6 15.7 L12.5 16.6 L12 19.2 H8 L7.5 16.6 L5.4 15.7 L3.2 17.2 L1.8 15.8 L3.3 13.6 L2.4 11.5 L0 11 V9 L2.4 8.5 L3.3 6.4 L1.8 4.2 L3.2 2.8 L5.4 4.3 L7.5 3.4 L8 0.8 Z" fill="#a6a6a6"/>
 <circle cx="10" cy="10" r="3.2" fill="#2c2c2c"/>
</svg>
</div>
  <div id="side" class="a"><div class="a" style="left:20px;top:12px;font-size:10.5px;color:#6f6f6f">EXPLORER</div>
<div class="hdr" style="top:35px"><svg style="left:7px;top:7px" width="7" height="7"><path d="M6.5 0.5 L6.5 6.5 L0.5 6.5 Z" fill="#5a5a5a"/></svg><span class="a" style="left:20px;top:0">OPEN EDITORS</span></div>
<div class="row" style="top:57px;background:#cdd0de"><div class="rb" style="left:39px;top:6px"></div><span class="t mod" style="left:56px">credentials_controller.r...</span><span class="t mod" style="left:216px">M</span></div>
<div class="hdr" style="top:79px"><svg style="left:7px;top:7px" width="7" height="7"><path d="M6.5 0.5 L6.5 6.5 L0.5 6.5 Z" fill="#5a5a5a"/></svg><span class="a" style="left:20px;top:0">PATHECURE</span></div>
<div class="row" style="top:101px"><svg style="left:20px;top:8px" width="7" height="7"><path d="M6.5 0.5 L6.5 6.5 L0.5 6.5 Z" fill="#5a5a5a"/></svg><span class="t mod" style="left:34px">app</span><div class="dot" style="left:216px;top:7px"></div></div>
<div class="row" style="top:123px"><svg style="left:32px;top:8px" width="7" height="7"><path d="M6.5 0.5 L6.5 6.5 L0.5 6.5 Z" fill="#5a5a5a"/></svg><span class="t mod" style="left:46px">controllers</span><div class="dot" style="left:216px;top:7px"></div></div>
<div class="row" style="top:145px"><svg style="left:46px;top:7px" width="7" height="9"><path d="M1.2 1.2 L4.8 4.5 L1.2 7.8 Z" fill="none" stroke="#5a5a5a" stroke-width="1.2"/></svg><span class="t" style="left:58px">concerns</span></div>
<div class="row" style="top:167px"><div class="rb" style="left:41px;top:6px"></div><span class="t" style="left:58px">application_controller.rb</span></div>
<div class="row" style="top:189px;background:#cdd0de"><div class="rb" style="left:41px;top:6px"></div><span class="t mod" style="left:58px">credentials_controller.rb</span><span class="t mod" style="left:216px">M</span></div>
<div class="row" style="top:211px"><div class="rb" style="left:41px;top:6px"></div><span class="t" style="left:58px">devices_controller.rb</span></div>
<div class="row" style="top:233px"><div class="rb" style="left:41px;top:6px"></div><span class="t" style="left:58px">search_controller.rb</span></div>
<div class="row" style="top:255px"><div class="rb" style="left:41px;top:6px"></div><span class="t" style="left:58px">tasks_controller.rb</span></div>
<div class="row" style="top:277px"><svg style="left:34px;top:7px" width="7" height="9"><path d="M1.2 1.2 L4.8 4.5 L1.2 7.8 Z" fill="none" stroke="#5a5a5a" stroke-width="1.2"/></svg><span class="t" style="left:46px">jobs</span></div>
<div class="row" style="top:299px"><svg style="left:34px;top:7px" width="7" height="9"><path d="M1.2 1.2 L4.8 4.5 L1.2 7.8 Z" fill="none" stroke="#5a5a5a" stroke-width="1.2"/></svg><span class="t" style="left:46px">models</span></div>
<div class="row" style="top:321px"><svg style="left:34px;top:7px" width="7" height="9"><path d="M1.2 1.2 L4.8 4.5 L1.2 7.8 Z" fill="none" stroke="#5a5a5a" stroke-width="1.2"/></svg><span class="t" style="left:46px">serializers</span></div>
<div class="row" style="top:343px"><svg style="left:34px;top:7px" width="7" height="9"><path d="M1.2 1.2 L4.8 4.5 L1.2 7.8 Z" fill="none" stroke="#5a5a5a" stroke-width="1.2"/></svg><span class="t" style="left:46px">views</span></div>
<div class="row" style="top:365px"><svg style="left:22px;top:7px" width="7" height="9"><path d="M1.2 1.2 L4.8 4.5 L1.2 7.8 Z" fill="none" stroke="#5a5a5a" stroke-width="1.2"/></svg><span class="t" style="left:34px">bin</span></div>
<div class="row" style="top:387px"><svg style="left:22px;top:7px" width="7" height="9"><path d="M1.2 1.2 L4.8 4.5 L1.2 7.8 Z" fill="none" stroke="#5a5a5a" stroke-width="1.2"/></svg><span class="t" style="left:34px">config</span></div>
<div class="row" style="top:409px"><svg style="left:22px;top:7px" width="7" height="9"><path d="M1.2 1.2 L4.8 4.5 L1.2 7.8 Z" fill="none" stroke="#5a5a5a" stroke-width="1.2"/></svg><span class="t" style="left:34px">db</span></div>
<div class="row" style="top:431px"><svg style="left:22px;top:7px" width="7" height="9"><path d="M1.2 1.2 L4.8 4.5 L1.2 7.8 Z" fill="none" stroke="#5a5a5a" stroke-width="1.2"/></svg><span class="t" style="left:34px">doc</span></div>
<div class="row" style="top:453px"><svg style="left:22px;top:7px" width="7" height="9"><path d="M1.2 1.2 L4.8 4.5 L1.2 7.8 Z" fill="none" stroke="#5a5a5a" stroke-width="1.2"/></svg><span class="t" style="left:34px">lib</span></div>
<div class="row" style="top:475px"><svg style="left:22px;top:7px" width="7" height="9"><path d="M1.2 1.2 L4.8 4.5 L1.2 7.8 Z" fill="none" stroke="#5a5a5a" stroke-width="1.2"/></svg><span class="t" style="left:34px">log</span></div>
<div class="row" style="top:497px"><svg style="left:22px;top:7px" width="7" height="9"><path d="M1.2 1.2 L4.8 4.5 L1.2 7.8 Z" fill="none" stroke="#5a5a5a" stroke-width="1.2"/></svg><span class="t" style="left:34px">public</span></div>
<div class="row" style="top:519px"><svg style="left:22px;top:7px" width="7" height="9"><path d="M1.2 1.2 L4.8 4.5 L1.2 7.8 Z" fill="none" stroke="#5a5a5a" stroke-width="1.2"/></svg><span class="t" style="left:34px">spec</span></div>
<div class="row" style="top:541px"><svg style="left:22px;top:7px" width="7" height="9"><path d="M1.2 1.2 L4.8 4.5 L1.2 7.8 Z" fill="none" stroke="#5a5a5a" stroke-width="1.2"/></svg><span class="t" style="left:34px">tmp</span></div>
<div class="row" style="top:563px"><svg style="left:22px;top:7px" width="7" height="9"><path d="M1.2 1.2 L4.8 4.5 L1.2 7.8 Z" fill="none" stroke="#5a5a5a" stroke-width="1.2"/></svg><span class="t" style="left:34px">vendor</span></div>
<div class="row" style="top:585px"><div class="a" style="left:19px;top:0;font-size:15px;font-weight:bold;font-style:italic;color:#a074c4;line-height:22px">!</div><span class="t" style="left:34px">.brakeman.yml</span></div>
<div class="row" style="top:607px"><svg style="left:16px;top:5px" width="12" height="12"><path d="M6 0.5 L11.5 6 L6 11.5 L0.5 6 Z" fill="#41535b"/><path d="M4.5 3.5 L7.5 6.5 M6 5 L6 9" stroke="#f3f3f3" stroke-width="1.1"/></svg><span class="t" style="left:34px">.gitignore</span></div>
<div class="row" style="top:629px"><div class="a" style="left:19px;top:0;font-size:15px;font-weight:bold;font-style:italic;color:#a074c4;line-height:22px">!</div><span class="t" style="left:34px">.gitlab-ci.yml</span></div>
<div class="row" style="top:651px"><svg style="left:17px;top:6px" width="10" height="10"><path d="M1 1.5H8M1 4H6M1 6.5H8M1 9H6" stroke="#c5c5c5" stroke-width="1"/></svg><span class="t" style="left:34px">.rspec</span></div>
<div class="row" style="top:673px"><div class="a" style="left:19px;top:0;font-size:15px;font-weight:bold;font-style:italic;color:#a074c4;line-height:22px">!</div><span class="t" style="left:34px">.rubocop.yml</span></div>
<div class="row" style="top:695px"><div class="rb" style="left:17px;top:6px"></div><span class="t" style="left:34px">Capfile</span></div>
<div class="row" style="top:717px"><div class="rb" style="left:17px;top:6px"></div><span class="t" style="left:34px">config.ru</span></div>
<div class="row" style="top:739px"><svg style="left:17px;top:6px" width="10" height="10"><path d="M1 1.5H8M1 4H6M1 6.5H8M1 9H6" stroke="#c5c5c5" stroke-width="1"/></svg><span class="t" style="left:34px">Gemfile</span></div>
<div class="row" style="top:761px"><svg style="left:17px;top:6px" width="10" height="10"><path d="M1 1.5H8M1 4H6M1 6.5H8M1 9H6" stroke="#c5c5c5" stroke-width="1"/></svg><span class="t" style="left:34px">Gemfile.lock</span></div>
<div class="row" style="top:783px"><div class="rb" style="left:17px;top:6px"></div><span class="t" style="left:34px">Rakefile</span></div>
<div class="row" style="top:805px"><svg style="left:16px;top:5px" width="12" height="12"><circle cx="6" cy="6" r="5.3" fill="none" stroke="#519aba" stroke-width="1.1"/><circle cx="6" cy="3.4" r="0.9" fill="#519aba"/><path d="M4.6 5.2H6.5V9.2M4.6 9.2H7.6" stroke="#519aba" stroke-width="1.1" fill="none"/></svg><span class="t" style="left:34px">README.md</span></div>
<div class="hdr" style="top:919px;border-top:1px solid #d8d8d8"><svg style="left:8px;top:7px" width="7" height="9"><path d="M1.2 1.2 L4.8 4.5 L1.2 7.8 Z" fill="none" stroke="#5a5a5a" stroke-width="1.2"/></svg><span class="a" style="left:20px;top:0">OUTLINE</span></div></div>
  <div id="tabs" class="a"><div class="a" style="left:0;top:0;width:209px;height:35px;background:#fff"></div>
<div class="rb" style="left:15px;top:13px"></div>
<div class="a" style="left:32px;top:0;font-size:14px;color:#333;line-height:36px">credentials_controller.rb</div>
<svg style="left:191px;top:14px" width="9" height="9"><path d="M1 1 L8 8 M8 1 L1 8" stroke="#424242" stroke-width="1.8"/></svg>
<svg style="left:1245px;top:11px" width="16" height="16" viewBox="0 0 16 16">
 <path d="M7 2.8 V0.6 H11 L13.8 3.4 V8.6 H11.2" fill="none" stroke="#333" stroke-width="1.2"/>
 <path d="M3.6 5.6 H1 V13.6 H6.4 V12.2" fill="none" stroke="#333" stroke-width="1.2"/>
 <circle cx="6.4" cy="7.4" r="3.2" fill="none" stroke="#1f6cb5" stroke-width="1.2"/>
 <path d="M8.6 9.8 L11.6 13" stroke="#1f6cb5" stroke-width="1.2"/>
</svg>
<svg style="left:1277px;top:12px" width="14" height="12" viewBox="0 0 14 12">
 <rect x="0.6" y="0.6" width="12.8" height="10.8" fill="none" stroke="#333" stroke-width="1.2"/>
 <rect x="0" y="0" width="14" height="2.2" fill="#333"/>
 <path d="M7 1 V11.5" stroke="#333" stroke-width="1.3"/>
</svg>
<svg style="left:1309px;top:15px" width="16" height="5"><circle cx="2.5" cy="2.5" r="1.7" fill="#333"/><circle cx="7.5" cy="2.5" r="1.7" fill="#333"/><circle cx="12.5" cy="2.5" r="1.7" fill="#333"/></svg>
</div>
  <div id="editor" class="a">
    <!-- current line -->
    <div class="a" style="left:66px;top:144px;width:1134px;height:18px;border-top:2px solid #eeeeee;border-bottom:2px solid #eeeeee"></div>
    <div class="a" style="left:80px;top:90px;width:22px;height:18px;background:#d6e0ea"></div>
    <div class="a" style="left:80px;top:144px;width:22px;height:18px;background:#d6e0ea"></div>
    <div class="ig" style="left:66.0px;top:36px;height:882px"></div>
<div class="ig" style="left:80.4px;top:108px;height:36px"></div>
<div class="ig" style="left:80.4px;top:216px;height:18px"></div>
<div class="ig" style="left:80.4px;top:306px;height:126px"></div>
<div class="ig" style="left:94.8px;top:360px;height:18px"></div>
<div class="ig" style="left:94.8px;top:396px;height:18px"></div>
<div class="ig" style="left:80.4px;top:504px;height:18px"></div>
<div class="ig" style="left:80.4px;top:594px;height:90px"></div>
<div class="ig" style="left:94.8px;top:612px;height:18px"></div>
<div class="ig" style="left:94.8px;top:648px;height:18px"></div>
<div class="ig" style="left:80.4px;top:756px;height:90px"></div>
<div class="ig" style="left:94.8px;top:774px;height:18px"></div>
<div class="ig" style="left:94.8px;top:810px;height:18px"></div>
    <div class="cl" style="top:0px"><span class="c"># Class Controller for Credential Model</span></div>
<div class="ln" style="top:0px">1</div>
<div class="cl" style="top:18px"><span class="k">class</span> CredentialsController &lt; ApplicationController</div>
<div class="ln" style="top:18px">2</div>
<div class="cl" style="top:36px">  before_action <span class="k">:set_credential</span>, <span class="k">only:</span> [<span class="k">:show</span>, <span class="k">:edit</span>, <span class="k">:update</span>, <span class="k">:destroy</span>]</div>
<div class="ln" style="top:36px">3</div>
<div class="cl" style="top:54px"></div>
<div class="ln" style="top:54px">4</div>
<div class="cl" style="top:72px">  <span class="c"># GET /credentials</span></div>
<div class="ln" style="top:72px">5</div>
<div class="cl" style="top:90px">  <span class="k">def</span> index</div>
<div class="ln" style="top:90px">6</div>
<div class="cl" style="top:108px">    @credentials = Credential.all</div>
<div class="ln" style="top:108px">7</div>
<div class="cl" style="top:126px">    render <span class="k">:json</span> =&gt; @credentials</div>
<div class="ln" style="top:126px">8</div>
<div class="cl" style="top:144px">  <span class="k">end</span></div>
<div class="ln cur" style="top:144px">9</div>
<div class="cl" style="top:162px"></div>
<div class="ln" style="top:162px">10</div>
<div class="cl" style="top:180px">  <span class="c"># GET /credentials/:id</span></div>
<div class="ln" style="top:180px">11</div>
<div class="cl" style="top:198px">  <span class="k">def</span> show</div>
<div class="ln" style="top:198px">12</div>
<div class="cl" style="top:216px">    render <span class="k">json:</span> @credential</div>
<div class="ln" style="top:216px">13</div>
<div class="cl" style="top:234px">  <span class="k">end</span></div>
<div class="ln" style="top:234px">14</div>
<div class="cl" style="top:252px"></div>
<div class="ln" style="top:252px">15</div>
<div class="cl" style="top:270px">  <span class="c"># POST /credentials</span></div>
<div class="ln" style="top:270px">16</div>
<div class="cl" style="top:288px">  <span class="k">def</span> create</div>
<div class="ln" style="top:288px">17</div>
<div class="cl" style="top:306px">    @credential = Credential.<span class="k">new</span>(credential_params)</div>
<div class="ln" style="top:306px">18</div>
<div class="cl" style="top:324px"></div>
<div class="ln" style="top:324px">19</div>
<div class="cl" style="top:342px">    <span class="k">if</span> @credential.save</div>
<div class="ln" style="top:342px">20</div>
<div class="cl" style="top:360px">      render <span class="k">status:</span> <span class="k">:created</span></div>
<div class="ln" style="top:360px">21</div>
<div class="cl" style="top:378px">    <span class="k">else</span></div>
<div class="ln" style="top:378px">22</div>
<div class="cl" style="top:396px">      render <span class="k">status:</span> <span class="k">:unprocessable_entity</span></div>
<div class="ln" style="top:396px">23</div>
<div class="cl" style="top:414px">    <span class="k">end</span></div>
<div class="ln" style="top:414px">24</div>
<div class="cl" style="top:432px">  <span class="k">end</span></div>
<div class="ln" style="top:432px">25</div>
<div class="cl" style="top:450px"></div>
<div class="ln" style="top:450px">26</div>
<div class="cl" style="top:468px">  <span class="c"># GET /credentials/:id/edit</span></div>
<div class="ln" style="top:468px">27</div>
<div class="cl" style="top:486px">  <span class="k">def</span> edit</div>
<div class="ln" style="top:486px">28</div>
<div class="cl" style="top:504px">    render <span class="k">json:</span> @credential</div>
<div class="ln" style="top:504px">29</div>
<div class="cl" style="top:522px">  <span class="k">end</span></div>
<div class="ln" style="top:522px">30</div>
<div class="cl" style="top:540px"></div>
<div class="ln" style="top:540px">31</div>
<div class="cl" style="top:558px">  <span class="c"># PATCH/PUT /credentials/:id</span></div>
<div class="ln" style="top:558px">32</div>
<div class="cl" style="top:576px">  <span class="k">def</span> update</div>
<div class="ln" style="top:576px">33</div>
<div class="cl" style="top:594px">    <span class="k">if</span> @credential.update(credential_params)</div>
<div class="ln" style="top:594px">34</div>
<div class="cl" style="top:612px">      render <span class="k">status:</span> <span class="k">:ok</span></div>
<div class="ln" style="top:612px">35</div>
<div class="cl" style="top:630px">    <span class="k">else</span></div>
<div class="ln" style="top:630px">36</div>
<div class="cl" style="top:648px">      render <span class="k">json:</span> @credential.errors, <span class="k">status:</span> <span class="k">:unprocessable_entity</span></div>
<div class="ln" style="top:648px">37</div>
<div class="cl" style="top:666px">    <span class="k">end</span></div>
<div class="ln" style="top:666px">38</div>
<div class="cl" style="top:684px">  <span class="k">end</span></div>
<div class="ln" style="top:684px">39</div>
<div class="cl" style="top:702px"></div>
<div class="ln" style="top:702px">40</div>
<div class="cl" style="top:720px">  <span class="c"># DELETE /credentials/:id</span></div>
<div class="ln" style="top:720px">41</div>
<div class="cl" style="top:738px">  <span class="k">def</span> destroy</div>
<div class="ln" style="top:738px">42</div>
<div class="cl" style="top:756px">    <span class="k">if</span> @credential.destroy</div>
<div class="ln" style="top:756px">43</div>
<div class="cl" style="top:774px">      render <span class="k">status:</span> <span class="k">:ok</span></div>
<div class="ln" style="top:774px">44</div>
<div class="cl" style="top:792px">    <span class="k">else</span></div>
<div class="ln" style="top:792px">45</div>
<div class="cl" style="top:810px">      render <span class="k">json:</span> @credential.errors, <span class="k">status:</span> <span class="k">:unprocessable_entity</span></div>
<div class="ln" style="top:810px">46</div>
<div class="cl" style="top:828px">    <span class="k">end</span></div>
<div class="ln" style="top:828px">47</div>
<div class="cl" style="top:846px">  <span class="k">end</span></div>
<div class="ln" style="top:846px">48</div>
<div class="cl" style="top:864px"></div>
<div class="ln" style="top:864px">49</div>
<div class="cl" style="top:882px">  <span class="k">private</span></div>
<div class="ln" style="top:882px">50</div>
<div class="cl" style="top:900px"></div>
<div class="ln" style="top:900px">51</div>
    <div class="a" style="left:102px;top:144px;width:2px;height:18px;background:#000"></div>
    <div class="a" style="left:45px;top:126px;width:3px;height:18px;background:#66afe0"></div>
    <svg style="left:145px;top:140px" width="58" height="4"><path d="M0 2 Q1.5 0 3 2 T6 2 T9 2 T12 2 T15 2 T18 2 T21 2 T24 2 T27 2 T30 2 T33 2 T36 2 T39 2 T42 2 T45 2 T48 2 T51 2 T54 2 T57 2" stroke="#2f9a2f" stroke-width="1.2" fill="none"/></svg>
    <div id="mm" class="a" style="left:1200px;top:1px;width:120px;height:130px"><div class="mml" style="top:0px"><span class="c"># Class Controller for Credential Model</span></div>
<div class="mml" style="top:2px"><span class="k">class</span> CredentialsController &lt; ApplicationController</div>
<div class="mml" style="top:4px">  before_action <span class="k">:set_credential</span>, <span class="k">only:</span> [<span class="k">:show</span>, <span class="k">:edit</span>, <span class="k">:update</span>, <span class="k">:destroy</span>]</div>
<div class="mml" style="top:6px"></div>
<div class="mml" style="top:8px">  <span class="c"># GET /credentials</span></div>
<div class="mml" style="top:10px">  <span class="k">def</span> index</div>
<div class="mml" style="top:12px">    @credentials = Credential.all</div>
<div class="mml" style="top:14px">    render <span class="k">:json</span> =&gt; @credentials</div>
<div class="mml" style="top:16px">  <span class="k">end</span></div>
<div class="mml" style="top:18px"></div>
<div class="mml" style="top:20px">  <span class="c"># GET /credentials/:id</span></div>
<div class="mml" style="top:22px">  <span class="k">def</span> show</div>
<div class="mml" style="top:24px">    render <span class="k">json:</span> @credential</div>
<div class="mml" style="top:26px">  <span class="k">end</span></div>
<div class="mml" style="top:28px"></div>
<div class="mml" style="top:30px">  <span class="c"># POST /credentials</span></div>
<div class="mml" style="top:32px">  <span class="k">def</span> create</div>
<div class="mml" style="top:34px">    @credential = Credential.<span class="k">new</span>(credential_params)</div>
<div class="mml" style="top:36px"></div>
<div class="mml" style="top:38px">    <span class="k">if</span> @credential.save</div>
<div class="mml" style="top:40px">      render <span class="k">status:</span> <span class="k">:created</span></div>
<div class="mml" style="top:42px">    <span class="k">else</span></div>
<div class="mml" style="top:44px">      render <span class="k">status:</span> <span class="k">:unprocessable_entity</span></div>
<div class="mml" style="top:46px">    <span class="k">end</span></div>
<div class="mml" style="top:48px">  <span class="k">end</span></div>
<div class="mml" style="top:50px"></div>
<div class="mml" style="top:52px">  <span class="c"># GET /credentials/:id/edit</span></div>
<div class="mml" style="top:54px">  <span class="k">def</span> edit</div>
<div class="mml" style="top:56px">    render <span class="k">json:</span> @credential</div>
<div class="mml" style="top:58px">  <span class="k">end</span></div>
<div class="mml" style="top:60px"></div>
<div class="mml" style="top:62px">  <span class="c"># PATCH/PUT /credentials/:id</span></div>
<div class="mml" style="top:64px">  <span class="k">def</span> update</div>
<div class="mml" style="top:66px">    <span class="k">if</span> @credential.update(credential_params)</div>
<div class="mml" style="top:68px">      render <span class="k">status:</span> <span class="k">:ok</span></div>
<div class="mml" style="top:70px">    <span class="k">else</span></div>
<div class="mml" style="top:72px">      render <span class="k">json:</span> @credential.errors, <span class="k">status:</span> <span class="k">:unprocessable_entity</span></div>
<div class="mml" style="top:74px">    <span class="k">end</span></div>
<div class="mml" style="top:76px">  <span class="k">end</span></div>
<div class="mml" style="top:78px"></div>
<div class="mml" style="top:80px">  <span class="c"># DELETE /credentials/:id</span></div>
<div class="mml" style="top:82px">  <span class="k">def</span> destroy</div>
<div class="mml" style="top:84px">    <span class="k">if</span> @credential.destroy</div>
<div class="mml" style="top:86px">      render <span class="k">status:</span> <span class="k">:ok</span></div>
<div class="mml" style="top:88px">    <span class="k">else</span></div>
<div class="mml" style="top:90px">      render <span class="k">json:</span> @credential.errors, <span class="k">status:</span> <span class="k">:unprocessable_entity</span></div>
<div class="mml" style="top:92px">    <span class="k">end</span></div>
<div class="mml" style="top:94px">  <span class="k">end</span></div>
<div class="mml" style="top:96px"></div>
<div class="mml" style="top:98px">  <span class="k">private</span></div>
<div class="mml" style="top:100px"></div>
<div class="mml" style="top:102px">  <span class="c"># Find the credential for the id param</span></div>
<div class="mml" style="top:104px">  <span class="k">def</span> set_credential</div>
<div class="mml" style="top:106px">    @credential = Credential.<span class="k">find</span>(params[<span class="k">:id</span>])</div>
<div class="mml" style="top:108px">  <span class="k">end</span></div>
<div class="mml" style="top:110px"></div>
<div class="mml" style="top:112px">  <span class="c"># Only allow a trusted parameter white list</span></div>
<div class="mml" style="top:114px">  <span class="k">def</span> credential_params</div>
<div class="mml" style="top:116px">    params.<span class="k">require</span>(<span class="k">:credential</span>).<span class="k">permit</span>(<span class="k">:name</span>, <span class="k">:username</span>, <span class="k">:password</span>)</div>
<div class="mml" style="top:118px">  <span class="k">end</span></div>
<div class="mml" style="top:120px"><span class="k">end</span></div></div>
    <!-- scrollbar -->
    <div class="a" style="left:1320px;top:0;width:14px;height:906px;border-left:1px solid #ececec"></div>
    <div class="a" style="left:1320px;top:0;width:14px;height:409px;background:#c1c1c1"></div>
    <div class="a" style="left:1324px;top:41px;width:6px;height:8px;background:#b9a2bd"></div>
    <div class="a" style="left:1321px;top:57px;width:4px;height:9px;background:#74a8cf"></div>
    <div class="a" style="left:1330px;top:57px;width:4px;height:9px;background:#5c62a0"></div>
    <div class="a" style="left:1320px;top:66px;width:14px;height:1px;background:#444"></div>
    <div class="a" style="left:1324px;top:67px;width:6px;height:7px;background:#b9a2bd"></div>
  </div>
  <div id="status" class="a"><svg style="left:15px;top:5px" width="9" height="13" viewBox="0 0 9 13"><circle cx="2" cy="1.8" r="1.3" fill="none" stroke="#fff" stroke-width="1"/><circle cx="2" cy="11.2" r="1.3" fill="none" stroke="#fff" stroke-width="1"/><circle cx="7.2" cy="3.2" r="1.3" fill="none" stroke="#fff" stroke-width="1"/><path d="M2 3.1 V9.9 M7.2 4.5 C7.2 8 2.5 7 2 9.9" fill="none" stroke="#fff" stroke-width="1.1"/></svg>
<span style="left:27px;font-weight:bold;font-size:12px">release/0.1.1*</span>
<svg style="left:119px;top:5px" width="12" height="12" viewBox="0 0 12 12"><path d="M10.2 4.5 A4.5 4.5 0 0 0 1.8 4.2 M1.8 7.5 A4.5 4.5 0 0 0 10.2 7.8" fill="none" stroke="#fff" stroke-width="1.6"/><path d="M10.8 1 V5 H7" fill="none" stroke="#fff" stroke-width="1.5"/><path d="M1.2 11 V7 H5" fill="none" stroke="#fff" stroke-width="1.5"/></svg>
<span style="left:133px;font-weight:bold;font-size:12.5px">0</span><svg style="left:141px;top:6px" width="8" height="11"><path d="M4 0.5 V10 M0.8 6.5 L4 10 L7.2 6.5" fill="none" stroke="#fff" stroke-width="1.5"/></svg><span style="left:154px;font-weight:bold;font-size:12.5px">1</span><svg style="left:161px;top:6px" width="9" height="11"><path d="M4.5 10.5 V1 M1 4.5 L4.5 1 L8 4.5" fill="none" stroke="#fff" stroke-width="1.5"/></svg>
<svg style="left:183px;top:6px" width="11" height="11"><circle cx="5.5" cy="5.5" r="5.2" fill="#fff"/><path d="M3.3 3.3 L7.7 7.7 M7.7 3.3 L3.3 7.7" stroke="#007acc" stroke-width="1.6"/></svg>
<span style="left:198px;font-weight:bold;font-size:12.5px">0</span>
<svg style="left:211px;top:6px" width="12" height="11"><path d="M6 0.5 L11.5 10.5 H0.5 Z" fill="#fff"/><path d="M6 4 V7.2 M6 8.3 V9.5" stroke="#007acc" stroke-width="1.4"/></svg>
<span style="left:226px;font-weight:bold;font-size:12.5px">0</span>
<svg style="left:238px;top:6px" width="11" height="11"><circle cx="5.5" cy="5.5" r="5.2" fill="#fff"/><path d="M5.5 4.5 V9" stroke="#007acc" stroke-width="1.6"/><circle cx="5.5" cy="2.8" r="0.9" fill="#007acc"/></svg>
<span style="left:253px;font-weight:bold;font-size:12.5px">1</span>
<span style="left:1292px;font-weight:bold;font-size:12.5px">Ln 9, Col 6</span>
<span style="left:1369px;font-weight:bold;font-size:12.5px">Spaces: 2</span>
<span style="left:1439px;font-weight:bold;font-size:12.5px">UTF-8</span>
<span style="left:1491px;font-weight:bold;font-size:12.5px">LF</span>
<span style="left:1520px;font-weight:bold;font-size:12.5px">Ruby</span>
<svg style="left:1565px;top:4px" width="14" height="14"><circle cx="7" cy="7" r="6.6" fill="#fff"/><circle cx="4.8" cy="5.2" r="1" fill="#007acc"/><circle cx="9.2" cy="5.2" r="1" fill="#007acc"/><path d="M3.6 8 Q7 12 10.4 8" fill="none" stroke="#007acc" stroke-width="1.3"/></svg>
<svg style="left:1594px;top:4px" width="14" height="14"><path d="M7 1 C3.5 1 3 4 3 6.5 C3 9 2 10 1 11 H13 C12 10 11 9 11 6.5 C11 4 10.5 1 7 1 Z" fill="#fff"/><path d="M5.5 12 A1.6 1.6 0 0 0 8.5 12" fill="#fff"/></svg>
</div>
</div>
<!-- overlay -->

</body></html>
